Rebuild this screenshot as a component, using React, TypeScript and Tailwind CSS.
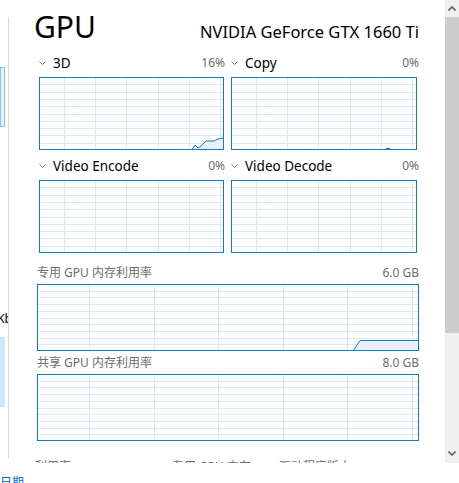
import type { ReactNode } from "react";

const BLUE = "#117dbb";
const GRID = "#d9eaf4";

function Chart({
  w,
  h,
  colStart,
  colStep,
  rows,
  children,
}: {
  w: number;
  h: number;
  colStart: number;
  colStep: number;
  rows: number;
  children?: ReactNode;
}) {
  const cols: number[] = [];
  for (let x = colStart; x < w - 1; x += colStep) cols.push(Math.round(x) + 0.5);
  const lines: number[] = [];
  for (let i = 1; i < rows; i++) lines.push(Math.round((h * i) / rows) + 0.5);
  return (
    <svg width={w} height={h} className="block">
      {lines.map((y) => (
        <line key={"h" + y} x1={0} x2={w} y1={y} y2={y} stroke={GRID} strokeWidth={1} />
      ))}
      {cols.map((x) => (
        <line key={"v" + x} x1={x} x2={x} y1={0} y2={h} stroke={GRID} strokeWidth={1} />
      ))}
      {children}
      <rect x={0.5} y={0.5} width={w - 1} height={h - 1} fill="none" stroke={BLUE} strokeWidth={1} />
    </svg>
  );
}

function Chevron() {
  return (
    <svg width="8" height="5" viewBox="0 0 8 5" className="mr-[6px] mt-[5px] shrink-0">
      <polyline points="0.5,0.5 3.5,3.5 6.5,0.5" fill="none" stroke="#808080" strokeWidth="1" />
    </svg>
  );
}

function Engine({
  name,
  value,
  w,
  children,
}: {
  name: string;
  value: string;
  w: number;
  children?: ReactNode;
}) {
  return (
    <div className="mb-[8px]">
      <div className="flex h-[22px] items-start justify-between pt-[1px]">
        <div className="flex items-start">
          <Chevron />
          <span className="text-[13.5px] leading-[14px] text-black">{name}</span>
        </div>
        <span className="mt-[1px] text-[12px] leading-[12px] text-[#6d6d6d]">{value}</span>
      </div>
      <Chart w={w} h={73} colStart={25} colStep={31.2} rows={10}>
        {children}
      </Chart>
    </div>
  );
}

function MemLabel({ name, value }: { name: string; value: string }) {
  return (
    <div className="flex h-[23px] items-start justify-between pt-[5px] text-[12px] leading-[14px] text-[#6d6d6d]">
      <span>{name}</span>
      <span>{value}</span>
    </div>
  );
}

export default function App() {
  return (
    <div className="h-[483px] w-[459px] overflow-hidden bg-white font-['Segoe_UI','Noto_Sans','Noto_Sans_CJK_SC',sans-serif]">
      <div className="flex h-[463px]">
        <aside className="flex w-[9px] shrink-0 pb-[5px] pt-[17px]">
          <div className="flex w-[9px] flex-col overflow-hidden border-r border-[#dadada]">
            <div className="mt-[50px] h-[60px] w-[5px] border border-[#84c4ef] bg-[#e5f3fb]" />
            <div className="mt-[185px] flex justify-end">
              <span className="-mr-[4px] shrink-0 whitespace-nowrap text-[12px] leading-[14px] text-black">0 Kb</span>
            </div>
            <div className="mt-[11px] h-[70px] w-[5px] bg-[#cce8ff]" />
          </div>
        </aside>

        <main className="w-[436px] shrink-0 overflow-hidden pl-[28px]">
          <div className="w-[382px]">
            <div className="flex h-[55px] items-baseline justify-between pt-[12px]">
              <span className="-ml-[3px] text-[30px] leading-[30px] text-black">GPU</span>
              <span className="text-[16.5px] leading-[20px] text-black">NVIDIA GeForce GTX 1660 Ti</span>
            </div>

            <div className="ml-[2px] grid grid-cols-[186px_188px] gap-x-[6px]">
              <Engine name="3D" value="16%" w={185}>
                <polygon
                  points="153,73 156,68 159,71 162,69 167,64 175,64 179,62 184,61 184,73"
                  fill="#e8f1f8"
                />
                <polyline
                  points="153,72.5 156,68 159,71 162,69 167,64 175,64 179,62 184,61"
                  fill="none"
                  stroke={BLUE}
                  strokeWidth={1}
                />
              </Engine>
              <Engine name="Copy" value="0%" w={186}>
                <line x1={155} x2={159} y1={71.5} y2={71.5} stroke={BLUE} strokeWidth={1} />
              </Engine>
              <Engine name="Video Encode" value="0%" w={185} />
              <Engine name="Video Decode" value="0%" w={186} />
            </div>

            <MemLabel name="专用 GPU 内存利用率" value="6.0 GB" />
            <Chart w={382} h={67} colStart={52} colStep={64.5} rows={10}>
              <polygon points="316,67 323,56 382,56 382,67" fill="#e8f1f8" />
              <polyline points="316,67 323,56.5 382,56.5" fill="none" stroke={BLUE} strokeWidth={1} />
            </Chart>

            <MemLabel name="共享 GPU 内存利用率" value="8.0 GB" />
            <Chart w={382} h={67} colStart={52} colStep={64.5} rows={10} />

            <div className="mt-[19px] flex text-[12px] leading-[14px] text-[#6d6d6d]">
              <span className="-ml-[2px] w-[137px]">利用率</span>
              <span className="w-[107px]">专用 GPU 内存</span>
              <span className="w-[126px]">驱动程序版本:</span>
              <span className="text-[#1a1a5a]">-</span>
            </div>
          </div>
        </main>

        <div className="flex w-[14px] shrink-0 flex-col bg-[#f0f0f0]">
          <div className="flex h-[17px] items-center justify-center">
            <svg width="8" height="5" viewBox="0 0 8 5">
              <polyline points="0.5,4.5 4,1 7.5,4.5" fill="none" stroke="#606060" strokeWidth="1.6" />
            </svg>
          </div>
          <div className="h-[316px] bg-[#cdcdcd]" />
          <div className="flex flex-1 items-end justify-center pb-[7px]">
            <svg width="8" height="5" viewBox="0 0 8 5">
              <polyline points="0.5,0.5 4,4 7.5,0.5" fill="none" stroke="#606060" strokeWidth="1.6" />
            </svg>
          </div>
        </div>
      </div>
      <div className="pt-[13px] text-[12px] leading-[14px] text-[#0066cc]">日期</div>
    </div>
  );
}
